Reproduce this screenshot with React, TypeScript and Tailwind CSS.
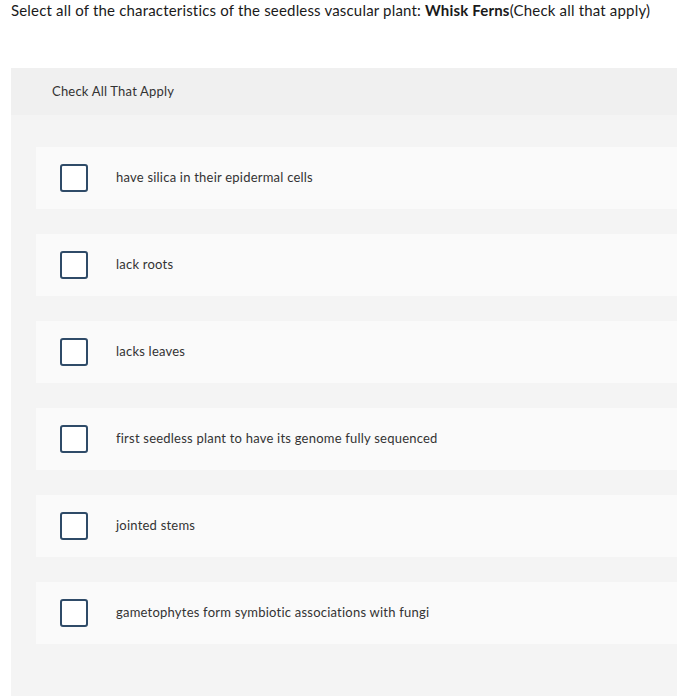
import React from "react";

const OPTIONS = [
  "have silica in their epidermal cells",
  "lack roots",
  "lacks leaves",
  "first seedless plant to have its genome fully sequenced",
  "jointed stems",
  "gametophytes form symbiotic associations with fungi",
];

export default function App() {
  return (
    <div className="h-[700px] w-[677px] overflow-hidden bg-white font-['Lato',sans-serif] text-[#222]">
      <p className="pl-[11px] pt-0 text-[15px] leading-[20px] tracking-[0.18px] text-[#1a1a1a]">
        Select all of the characteristics of the seedless vascular plant: <b>Whisk Ferns</b>(Check all that apply)
      </p>

      <div className="ml-[11px] mt-[48px] h-[628px] bg-[#f4f4f4]">
        <div className="flex h-[47px] items-center bg-[#f0f0f0] pl-[41px] text-[13px] tracking-[0.2px] text-[#333]">
          Check All That Apply
        </div>
        <div className="flex flex-col gap-[25px] pl-[25px] pt-[32px]">
          {OPTIONS.map((label) => (
            <label key={label} className="flex h-[62px] items-center bg-[#fafafa]">
              <span className="ml-[24px] h-[28px] w-[28px] rounded-[3px] border-2 border-[#2f4b68] bg-white" />
              <span className="ml-[28px] text-[13px] tracking-[0.22px] text-[#333]">{label}</span>
            </label>
          ))}
        </div>
      </div>
    </div>
  );
}
